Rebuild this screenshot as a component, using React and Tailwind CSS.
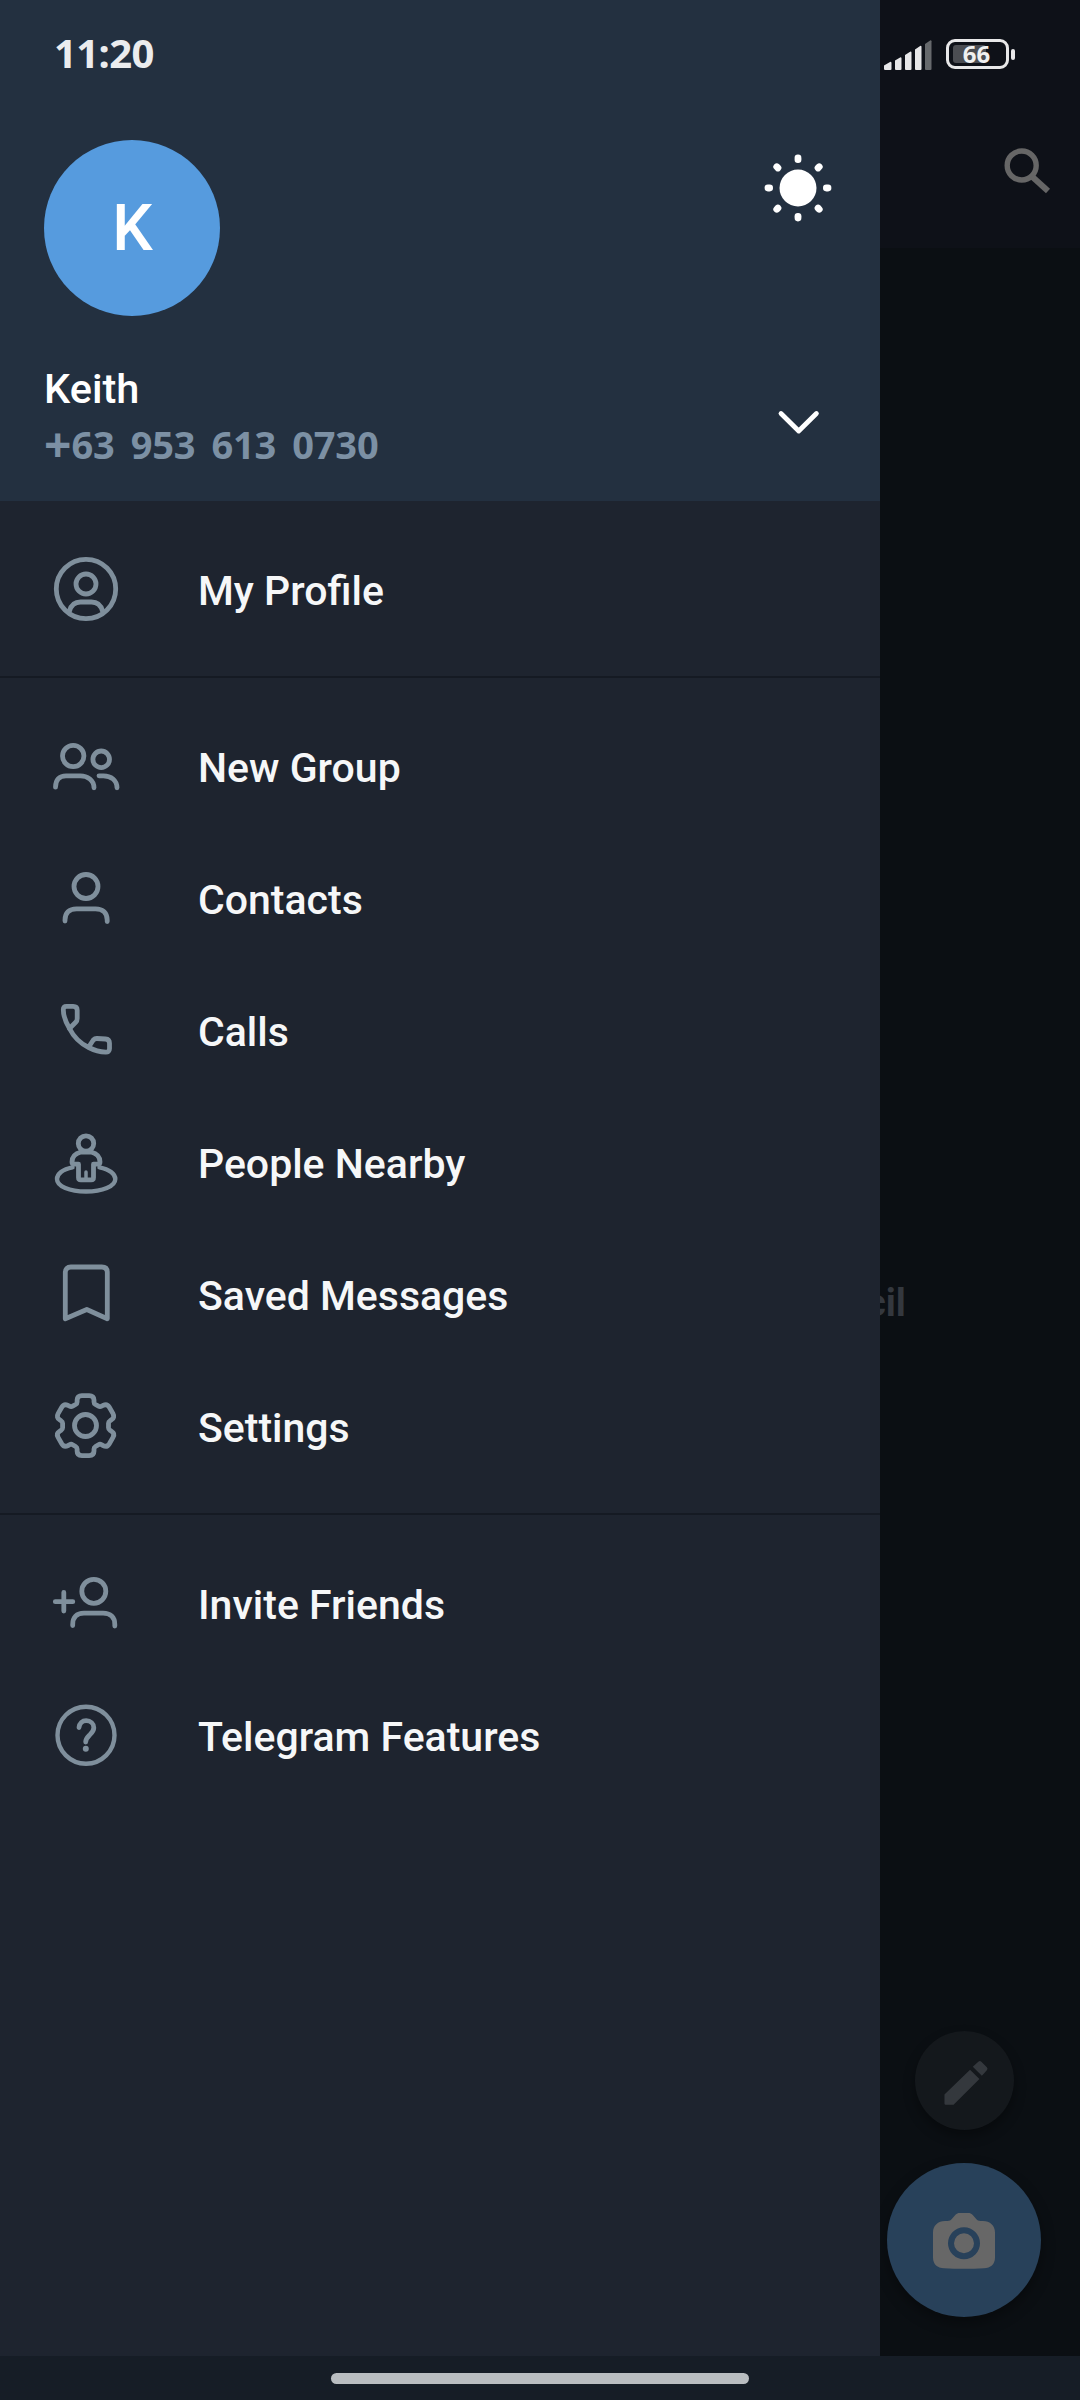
const ICON_CLASS = 'h-[72px] w-[72px] shrink-0 text-[#7f8f9c]'

// All menu icons share a 72x72 canvas with its centre at 36,36.
function MenuIcon({ children }) {
  return (
    <svg
      className={ICON_CLASS}
      viewBox="0 0 72 72"
      fill="none"
      stroke="currentColor"
      strokeWidth="4.8"
      strokeLinecap="round"
      strokeLinejoin="round"
      aria-hidden="true"
    >
      {children}
    </svg>
  )
}

function ProfileIcon() {
  return (
    <MenuIcon>
      <circle cx="36" cy="36" r="29.7" />
      <circle cx="36" cy="31" r="10" />
      <path d="M19.5 58C21 52.500 25 49 30.5 49h11c5.500 0 9.500 3.500 11 9" />
    </MenuIcon>
  )
}

function GroupIcon() {
  return (
    <MenuIcon>
      <circle cx="23.200" cy="26" r="10.700" />
      <circle cx="51.200" cy="29.300" r="8.300" />
      <path d="M5.500 57.200C5.500 49.500 9.500 45.800 16 45.800h14.500c6.500 0 13.500 4 13.500 12" />
      <path d="M49 45.800h4.500c7.500 0 13.500 4.500 13.500 12" />
    </MenuIcon>
  )
}

function ContactIcon() {
  return (
    <MenuIcon>
      <circle cx="36" cy="24.500" r="12" />
      <path d="M15 59V58C15 51 19 46.800 26.500 46.800h19c7.500 0 11.700 4 11.700 11.300v1.400" />
    </MenuIcon>
  )
}

function CallIcon() {
  return (
    <MenuIcon>
      <g transform="translate(0 2)">
        <path d="M16.500 10.300h6.700c2.500 0 4 1.500 4 4v8.200c0 1.600-.4 2.700-1.500 3.800L19.500 32.500C15.300 25.500 13.300 19 13.300 13.500c0-2 1.200-3.200 3.200-3.200Z" />
        <path d="M19.500 32.500C24 41.500 30 47.300 38.700 51.500c4.800 2.500 11 4.500 17 4.700 2.200.1 3.800-1.200 3.800-3.500v-5.500c0-2.500-1.500-4-4-4.200L47 42.500c-1.500-.1-2.700.5-3.700 1.500l-4.600 7" />
      </g>
    </MenuIcon>
  )
}

function NearbyIcon() {
  return (
    <MenuIcon>
      <circle cx="36" cy="17.500" r="7.700" />
      <path d="M31 26C25 27.500 22 31.500 22 36c0 1.500.8 2.200 2.200 2.200h4.300V51.500c0 1.500.8 2.300 2.300 2.300h10.400c1.500 0 2.300-.8 2.300-2.300V38.200h4.300c1.400 0 2.200-.7 2.200-2.200 0-4.500-3-8.500-9-10Z" />
      <path d="M36 46v6.500" strokeWidth="3.500" />
      <path d="M22.500 41.300C12.500 43.200 7 48 7 53 7 60.300 19.500 65.500 36 65.500s29.300-5.200 29.300-12.500c0-5-5.800-9.800-15.800-11.700" strokeWidth="4.400" />
    </MenuIcon>
  )
}

function SavedIcon() {
  return (
    <MenuIcon>
      <path d="M15.300 60.800V14.500c0-3.500 2-5.500 5.500-5.500h31c3.500 0 5.500 2 5.500 5.500v46.300L36.800 51.500Z" />
    </MenuIcon>
  )
}

function SettingsIcon() {
  return (
    <MenuIcon>
      <g transform="translate(-.2 -1)">
        <circle cx="35.700" cy="36.500" r="11" />
        <path d="M32 6.600h7.500c3 0 4.700 1.700 4.700 4.300v2c0 1.200.5 2 1.500 2.600l3 1.700c1 .6 2 .6 3 0l1.600-.8c2.400-1.300 4.700-.7 6.100 1.600l3.800 6.600c1.400 2.400.8 4.800-1.500 6.200l-1.500 1c-1.100.6-1.500 1.300-1.500 2.500v4.500c0 1.200.4 1.900 1.500 2.500l1.500 1c2.300 1.400 2.900 3.700 1.500 6.100l-3.800 6.600c-1.400 2.300-3.700 2.900-6.100 1.600l-1.600-.9c-1-.6-2-.6-3 0l-3 1.800c-1 .6-1.500 1.400-1.500 2.600v2c0 2.800-1.700 4.500-4.700 4.500H32c-3 0-4.700-1.700-4.700-4.500v-2c0-1.200-.5-2-1.500-2.600l-3-1.800c-1-.6-2-.6-3 0l-1.600.9c-2.400 1.300-4.700.7-6.100-1.600l-3.800-6.600c-1.400-2.400-.8-4.700 1.500-6.100l1.500-1c1.100-.6 1.500-1.300 1.500-2.500v-4.500c0-1.200-.4-1.900-1.500-2.500l-1.500-1c-2.300-1.400-2.900-3.800-1.500-6.200l3.800-6.600c1.400-2.300 3.700-2.900 6.100-1.600l1.600.8c1 .6 2 .6 3 0l3-1.700c1-.6 1.500-1.400 1.500-2.600v-2c0-2.600 1.700-4.300 4.700-4.300Z" />
      </g>
    </MenuIcon>
  )
}

function InviteIcon() {
  return (
    <MenuIcon>
      <circle cx="43.800" cy="24.300" r="12" />
      <path d="M22.700 58.500V57.500C22.700 50.500 26.500 46.200 34 46.200h19c7.500 0 11.800 4 11.800 11.300v1.500" />
      <path d="M5.300 34.700h17.500M13.800 25.500v18.500" />
    </MenuIcon>
  )
}

function HelpIcon() {
  return (
    <MenuIcon>
      <circle cx="36" cy="36.200" r="28.500" strokeWidth="4.400" />
      <path d="M29 28.500c.5-4.300 3.300-6.800 7.200-6.800 4.300 0 7.600 3 7.600 7 0 3.300-2 5-4.200 7.300-2.400 2.400-3.900 4-3.900 7" />
      <circle cx="35.800" cy="49.700" r="3" fill="currentColor" stroke="none" />
    </MenuIcon>
  )
}

const MENU_GROUPS = [
  [{ label: 'My Profile', Icon: ProfileIcon }],
  [
    { label: 'New Group', Icon: GroupIcon },
    { label: 'Contacts', Icon: ContactIcon },
    { label: 'Calls', Icon: CallIcon },
    { label: 'People Nearby', Icon: NearbyIcon },
    { label: 'Saved Messages', Icon: SavedIcon },
    { label: 'Settings', Icon: SettingsIcon },
  ],
  [
    { label: 'Invite Friends', Icon: InviteIcon },
    { label: 'Telegram Features', Icon: HelpIcon },
  ],
]

const SUN_RAYS = [0, 45, 90, 135, 180, 225, 270, 315]

function SunIcon() {
  return (
    <svg className="h-[72px] w-[72px]" viewBox="-36 -36 72 72" fill="#fff">
      <circle r="18.500" />
      {SUN_RAYS.map((angle) => (
        <rect
          key={angle}
          x="-3.400"
          y="-33.400"
          width="6.800"
          height="8.400"
          rx="3.300"
          transform={`rotate(${angle})`}
        />
      ))}
    </svg>
  )
}

function DrawerHeader() {
  return (
    <header className="flex h-[501px] flex-col bg-[#233040]">
      <div className="flex h-[140px] items-start pt-[25px] pl-[54px]">
        <time className="font-['Noto_Sans',sans-serif] text-[40px] leading-[56px] font-bold tracking-[-0.6px] text-[#ebecee]">
          11:20
        </time>
      </div>
      <div className="flex justify-between pr-[46px] pl-11">
        <div className="flex h-44 w-44 items-center justify-center rounded-full bg-[#569bde] pt-0.5 pl-px text-[64px] font-medium text-white">
          K
        </div>
        <button type="button" className="mt-3 h-[72px]" aria-label="Day mode">
          <SunIcon />
        </button>
      </div>
      <div className="flex items-start justify-between pt-[47px] pr-[58px] pl-11">
        <div>
          <h1 className="text-[41.5px] leading-[52px] font-medium text-white">Keith</h1>
          <p className="mt-[3px] flex font-['Noto_Sans',sans-serif] text-[38px] leading-[52px] font-bold text-[#7c90a4]">
            <span className="text-[48px]">+</span>
            <span className="tracking-[-0.2px] [word-spacing:6.5px]">63 953 613 0730</span>
          </p>
        </div>
        <button type="button" className="mt-[39px]" aria-label="Show accounts">
          <svg className="h-10 w-12" viewBox="0 0 48 40" fill="none" stroke="#fff" strokeWidth="4.800" strokeLinecap="round" strokeLinejoin="round">
            <path d="M7 11.500 24.700 29 42.400 11.500" />
          </svg>
        </button>
      </div>
    </header>
  )
}

function MenuItem({ label, Icon }) {
  return (
    <li>
      <button type="button" className="flex h-[132px] w-full items-center pl-[50px] text-left">
        <Icon />
        <span className="mt-1 ml-[76px] text-[41px] leading-none font-medium text-[#f6f7f8]">
          {label}
        </span>
      </button>
    </li>
  )
}

function Drawer() {
  return (
    <aside className="relative z-10 flex w-[880px] shrink-0 flex-col bg-[#1e242f]">
      <DrawerHeader />
      <nav className="pt-[22px]">
        {MENU_GROUPS.map((items, index) => (
          <ul
            key={items[0].label}
            className={index > 0 ? 'mt-[21px] border-t-2 border-[#151a23] pt-[22px]' : ''}
          >
            {items.map((item) => (
              <MenuItem key={item.label} {...item} />
            ))}
          </ul>
        ))}
      </nav>
    </aside>
  )
}

function SignalIcon() {
  return (
    <svg className="h-8 w-12" viewBox="0 0 48 32" fill="#e8e8e9">
      <path d="M0 26.500 6 23a1 1 0 0 1 1.500 1v6q0 1-1 1H1.200q-1.200 0-1.200-1ZM11 21.500l5.500-3.300a1 1 0 0 1 1 1V30q0 1-1 1H12q-1 0-1-1ZM21 16l5.500-3.500a1 1 0 0 1 1 1V30q0 1-1 1H22q-1 0-1-1ZM31 10.500l5.500-3.800a1 1 0 0 1 1 1V30q0 1-1 1H32q-1 0-1-1Z" />
      <path d="M41 5l5.500-3.800a1 1 0 0 1 1 1V30q0 1-1 1H42q-1 0-1-1Z" fill="#66696c" />
    </svg>
  )
}

function BatteryIcon() {
  return (
    <div className="flex h-[30px] items-center gap-0.5">
      <div className="relative flex h-[30px] w-[63px] items-center justify-center rounded-[9px] border-3 border-[#e8e8e9]">
        <div className="absolute top-[3px] left-[4px] h-[18px] w-[33px] rounded-[3px] bg-[#4b4d52]" />
        <span className="relative -left-px font-['Noto_Sans',sans-serif] text-[24px] leading-none font-bold text-[#f0f0f0]">
          66
        </span>
      </div>
      <div className="h-[11px] w-1 rounded-full bg-[#e8e8e9]" />
    </div>
  )
}

function ChatsBackdrop() {
  return (
    <main className="flex flex-1 flex-col bg-[#0b0f13]">
      <div className="flex h-[248px] flex-col bg-[#0e1118]">
        <div className="flex h-[71px] gap-3.5 pt-[39px] pl-1">
          <SignalIcon />
          <BatteryIcon />
        </div>
        <svg className="mt-[74px] ml-[118px] h-[54px] w-[54px]" viewBox="0 0 54 54" fill="none" stroke="#666" strokeWidth="5.400">
          <circle cx="23.700" cy="20.500" r="14.500" />
          <path d="M34 31.500 50 46" strokeWidth="6" />
        </svg>
      </div>
      <div className="mt-[1027px]">
        <p className="-ml-[14px] text-[38px] leading-[56px] font-bold text-[#34383e]">cil</p>
      </div>
      <div className="mt-[700px] ml-[7px] flex w-[154px] flex-col items-center gap-[33px]">
        <button
          type="button"
          className="flex h-[99px] w-[99px] items-center justify-center rounded-full bg-[#14181c] shadow-[0_6px_12px_rgba(0,0,0,0.35)]"
          aria-label="New message"
        >
          <svg className="h-[66px] w-[66px] text-[#34383d]" viewBox="0 0 24 24" fill="currentColor">
            <path d="M4.900 16.900V20.300q0 .3.300.3H8.200L17.600 11.300 14.200 7.900ZM19.900 8.500 20.300 8.100q.5-.5 0-1.100L18.300 5q-.5-.5-1.100 0L15.200 6.800 18.500 10.100Z" />
          </svg>
        </button>
        <button
          type="button"
          className="flex h-[154px] w-[154px] items-center justify-center rounded-full bg-[#28415a] shadow-[0_6px_14px_rgba(0,0,0,0.35)]"
          aria-label="New story"
        >
          <svg className="h-16 w-16" viewBox="0 0 64 64">
            <path
              d="M13 13h2.500c2 0 3.300-.8 4.500-2.200l3.500-4c1.200-1.300 2.500-1.800 4-1.800h9c1.500 0 2.800.5 4 1.800l3.500 4c1.200 1.400 2.500 2.200 4.500 2.200H51c7 0 12 4.500 12 11.500v25C63 56.500 58.500 60 52 60.300q-20 1-40 0C5.500 60 1 56.500 1 49.500v-25C1 17.500 6 13 13 13Z"
              fill="#676767"
            />
            <circle cx="32" cy="35.200" r="13" fill="#676767" stroke="#28415a" strokeWidth="6" />
          </svg>
        </button>
      </div>
    </main>
  )
}

function App() {
  return (
    <div className="flex h-[2400px] w-[1080px] flex-col overflow-hidden bg-[#161d26] font-[Roboto,sans-serif]">
      <div className="flex h-[2356px]">
        <Drawer />
        <ChatsBackdrop />
      </div>
      <footer className="flex h-11 items-center justify-center pt-px">
        <div className="h-[11px] w-[418px] rounded-full bg-[#b9bdc0]" />
      </footer>
    </div>
  )
}

export default App
